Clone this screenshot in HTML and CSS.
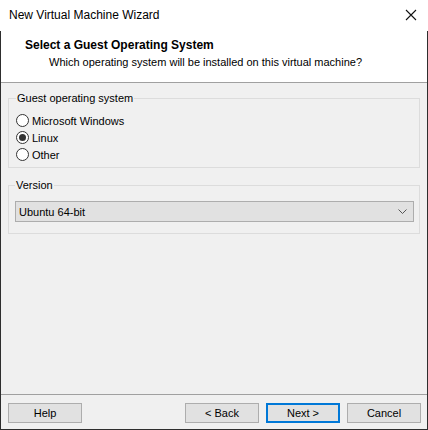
FILE: index.html
```html
<!DOCTYPE html>
<html>
<head>
<meta charset="utf-8">
<link rel="stylesheet" href="styles.css">
</head>
<body>
<div class="window">
  <div class="titlebar">
    <span class="title">New Virtual Machine Wizard</span>
    <svg class="close" width="12" height="12" viewBox="0 0 12 12"><path d="M1 1 L11 11 M11 1 L1 11" stroke="#111" stroke-width="1.1" fill="none"/></svg>
  </div>
  <div class="frame">
    <div class="header">
      <div class="h-title">Select a Guest Operating System</div>
      <div class="h-sub">Which operating system will be installed on this virtual machine?</div>
    </div>
    <div class="content">
      <fieldset class="group group-os">
        <legend>Guest operating system</legend>
        <div class="radio-row"><span class="radio"></span><span>Microsoft Windows</span></div>
        <div class="radio-row"><span class="radio checked"></span><span>Linux</span></div>
        <div class="radio-row"><span class="radio"></span><span>Other</span></div>
      </fieldset>
      <fieldset class="group group-ver">
        <legend>Version</legend>
        <div class="select">
          <span>Ubuntu 64-bit</span>
          <svg class="chev" width="9" height="5" viewBox="0 0 9 5"><path d="M0.5 0.5 L4.5 4.5 L8.5 0.5" stroke="#555" stroke-width="1" fill="none"/></svg>
        </div>
      </fieldset>
    </div>
    <div class="footer">
      <button class="btn">Help</button>
      <div class="spacer"></div>
      <button class="btn">&lt; Back</button>
      <button class="btn primary">Next &gt;</button>
      <button class="btn">Cancel</button>
    </div>
  </div>
</div>
</body>
</html>
```

FILE: styles.css
```css
* { box-sizing: border-box; }
html, body { margin: 0; padding: 0; }
body {
  width: 428px;
  height: 430px;
  overflow: hidden;
  font-family: "Liberation Sans", Arial, sans-serif;
  font-size: 11px;
  color: #000;
  background: #fff;
}
.window {
  width: 428px;
  height: 430px;
  display: flex;
  flex-direction: column;
}
.titlebar {
  height: 31px;
  flex: none;
  background: #fff;
  display: flex;
  align-items: center;
  justify-content: space-between;
  padding: 0 11px 1px 9px;
  font-size: 12px;
}
.close { display: block; }
.frame {
  flex: 1;
  display: flex;
  flex-direction: column;
  border-left: 1px solid #2e2e2e;
  border-right: 1px solid #2e2e2e;
  border-bottom: 1px solid #2e2e2e;
  background: #f0f0f0;
}
.header {
  background: #fff;
  height: 52px;
  flex: none;
  border-bottom: 1px solid #a0a0a0;
  padding: 6px 0 0 24px;
}
.h-title {
  font-weight: bold;
  font-size: 12px;
  line-height: 16px;
}
.h-sub {
  line-height: 16px;
  padding-left: 24px;
  margin-top: 1px;
}
.content {
  flex: 1;
  padding: 8px 7px 0 7px;
  display: flex;
  flex-direction: column;
  gap: 10px;
}
.group {
  margin: 0;
  border: 1px solid #dcdcdc;
  padding: 0 5px 0 6px;
  min-width: 0;
}
.group legend {
  padding: 0 1px;
  line-height: 15px;
}
.group-os { padding-top: 6px; padding-bottom: 4px; padding-left: 7px; }
.radio-row {
  display: flex;
  align-items: center;
  height: 17px;
  gap: 3px;
}
.radio {
  width: 13px;
  height: 13px;
  border: 1px solid #333;
  border-radius: 50%;
  background: #fff;
  display: flex;
  align-items: center;
  justify-content: center;
  flex: none;
}
.radio.checked::after {
  content: "";
  width: 7px;
  height: 7px;
  border-radius: 50%;
  background: #333;
}
.group-ver { padding-top: 8px; padding-bottom: 11px; }
.select {
  height: 21px;
  background: #e1e1e1;
  border: 1px solid #adadad;
  display: flex;
  align-items: center;
  justify-content: space-between;
  padding: 0 6px 0 3px;
}
.chev { display: block; }
.footer {
  flex: none;
  border-top: 1px solid #a0a0a0;
  padding: 8px 6px 6px 7px;
  display: flex;
  gap: 7px;
}
.spacer { flex: 1; }
.btn {
  width: 74px;
  height: 20px;
  background: #e1e1e1;
  border: 1px solid #adadad;
  font-family: "Liberation Sans", Arial, sans-serif;
  font-size: 11px;
  color: #000;
  padding: 0;
  margin: 0;
}
.btn.primary { border: 2px solid #0078d7; }
```
